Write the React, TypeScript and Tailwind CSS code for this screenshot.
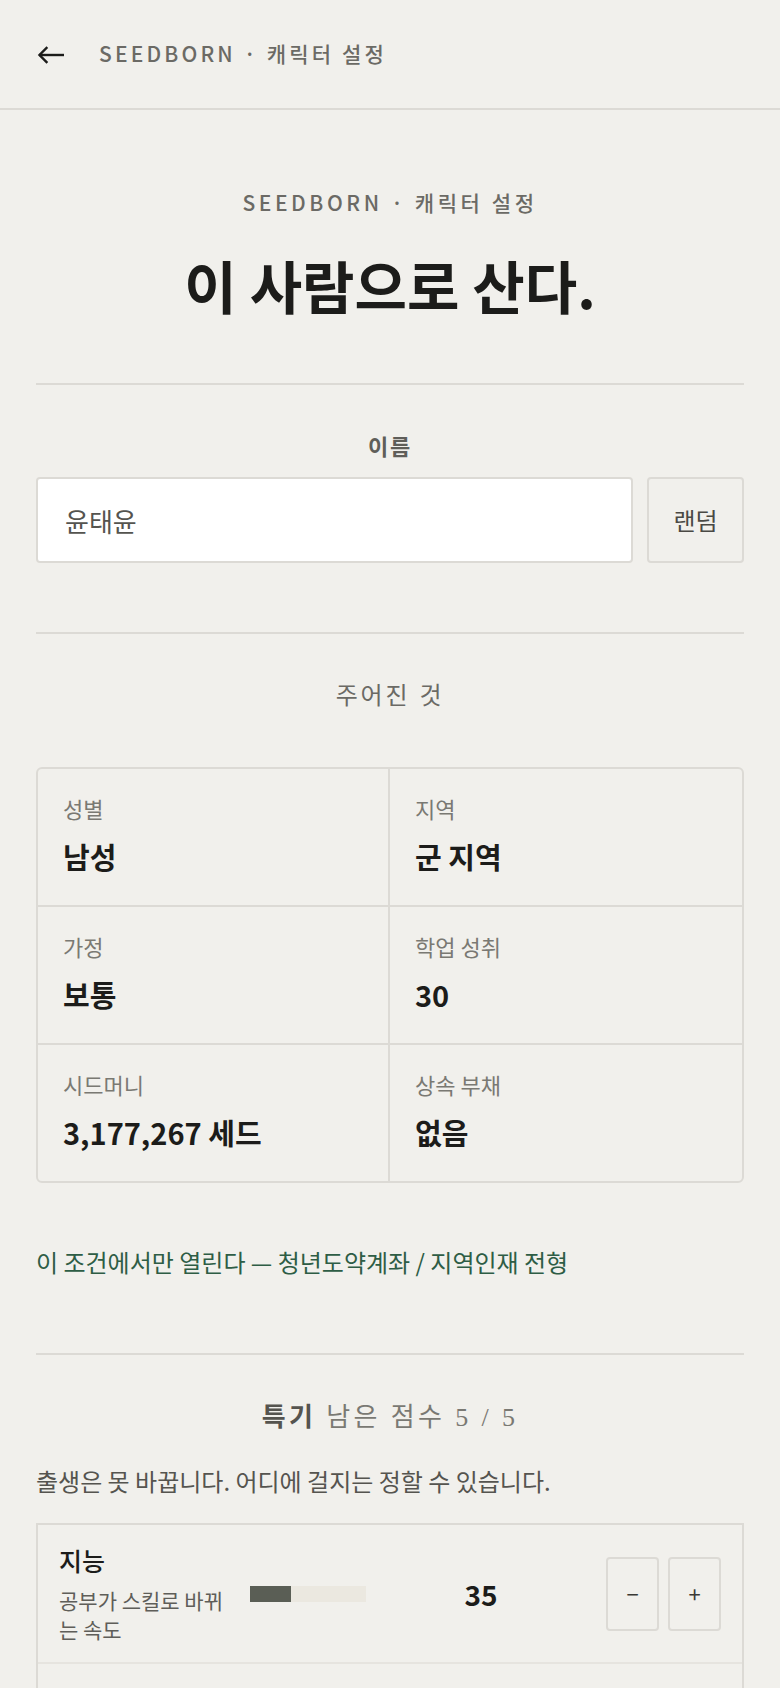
import { useState } from "react";

const sans = "font-['Noto_Sans_CJK_KR','Noto_Sans',sans-serif]";
const serif = "font-['Liberation_Serif','Noto_Sans_CJK_KR',serif]";

const given = [
  { label: "성별", value: "남성" },
  { label: "지역", value: "군 지역" },
  { label: "가정", value: "보통" },
  { label: "학업 성취", value: "30" },
  { label: "시드머니", value: "3,177,267 세드" },
  { label: "상속 부채", value: "없음" },
];

const stats = [
  { name: "지능", desc: "공부가 스킬로 바뀌는 속도", value: 35 },
  { name: "체력", desc: "야근과 노동을 버티는 한계", value: 40 },
];

const App = () => {
  const [name, setName] = useState("윤태윤");

  return (
    <div className={`min-h-screen bg-[#f1f0ec] text-[#1c1c1a] ${sans}`}>
      {/* Top bar */}
      <header className="h-[110px] border-b-2 border-[#dcdad5] flex items-center pl-[37px]">
        <button className="w-[28px] h-[18px] flex items-center mt-[1px]">
          <svg width="28" height="18" viewBox="0 0 28 18" fill="none">
            <path d="M2 9H27" stroke="#1c1c1a" strokeWidth="2.4" />
            <path d="M9.5 2L2.5 9L9.5 16" stroke="#1c1c1a" strokeWidth="2.4" strokeLinecap="square" />
          </svg>
        </button>
        <span className="ml-[34px] text-[21px] tracking-[0.15em] text-[#6b6a65] font-medium">
          SEEDBORN · 캐릭터 설정
        </span>
      </header>

      <main className="px-[36px]">
        {/* Heading */}
        <div className="pt-[76px] text-center">
          <p className="text-[21px] leading-[32px] tracking-[0.17em] text-[#6b6a65] font-medium">
            SEEDBORN · 캐릭터 설정
          </p>
          <h1 className="mt-[34px] text-[57px] leading-[64px] font-bold text-[#1c1c1a]">
            이 사람으로 산다.
          </h1>
        </div>

        <div className="mt-[67px] h-[2px] bg-[#dcdad5]" />

        {/* Name */}
        <div className="mt-[47px]">
          <p className={`text-center text-[22px] leading-[32px] tracking-[0.08em] font-bold text-[#5f5e59] ${serif}`}>
            이름
          </p>
          <div className="mt-[13px] flex gap-[14px]">
            <input
              value={name}
              onChange={(e) => setName(e.target.value)}
              className="flex-1 h-[86px] bg-white border-2 border-[#dcdad5] rounded-[4px] px-[27px] text-[26px] text-[#55544f] outline-none"
            />
            <button className="w-[97px] h-[86px] border-2 border-[#dcdad5] rounded-[4px] text-[24px] text-[#4a4944]">
              랜덤
            </button>
          </div>
        </div>

        <div className="mt-[69px] h-[2px] bg-[#dcdad5]" />

        {/* Given */}
        <p className={`mt-[44px] text-center text-[24px] leading-[36px] tracking-[0.12em] text-[#6b6a65] ${serif}`}>
          주어진 것
        </p>

        <div className="mt-[53px] border-2 border-[#dcdad5] rounded-[6px] grid grid-cols-2">
          {given.map((g, i) => (
            <div
              key={g.label}
              className={`pt-[23px] pb-[29px] px-[25px] ${i % 2 === 0 ? "border-r-2 border-[#dcdad5]" : ""} ${
                i < 4 ? "border-b-2 border-[#dcdad5]" : ""
              }`}
            >
              <p className="text-[22px] leading-[32px] text-[#7a7973]">{g.label}</p>
              <p className="mt-[12px] text-[29px] leading-[40px] font-bold text-[#1c1c1a]">{g.value}</p>
            </div>
          ))}
        </div>

        <p className="mt-[63px] text-[24px] leading-[32px] text-[#2e5d45]">
          이 조건에서만 열린다 — 청년도약계좌 / 지역인재 전형
        </p>

        <div className="mt-[75px] h-[2px] bg-[#dcdad5]" />

        {/* Talents */}
        <p className={`mt-[45px] text-center text-[26px] leading-[36px] tracking-[0.13em] text-[#7a7973] ${serif}`}>
          <span className="font-bold text-[#55544f]">특기</span> 남은 점수 5 / 5
        </p>
        <p className="mt-[29px] text-[24px] leading-[32px] text-[#55544f]">
          출생은 못 바꿉니다. 어디에 걸지는 정할 수 있습니다.
        </p>

        <div className="mt-[26px] border-2 border-[#dcdad5]">
          {stats.map((s) => (
            <div key={s.name} className="flex items-center py-[18px] pl-[21px] pr-[21px] border-b-2 border-[#e6e4df]">
              <div className="w-[182px]">
                <p className="text-[25px] leading-[34px] font-medium text-[#1c1c1a]">{s.name}</p>
                <p className="mt-[9px] text-[21px] leading-[29px] text-[#5f5e59]">{s.desc}</p>
              </div>
              <div className="ml-[9px] w-[116px] h-[16px] bg-[#ebe8e0]">
                <div className="h-full bg-[#5a5e55]" style={{ width: `${s.value}%` }} />
              </div>
              <div className="flex-1 pr-[10px] text-center text-[28px] font-bold text-[#1c1c1a]">{s.value}</div>
              <div className="flex gap-[9px]">
                <button className="w-[53px] h-[74px] border-2 border-[#dcdad5] rounded-[4px] text-[22px] text-[#3a3a36]">
                  −
                </button>
                <button className="w-[53px] h-[74px] border-2 border-[#dcdad5] rounded-[4px] text-[22px] text-[#3a3a36]">
                  +
                </button>
              </div>
            </div>
          ))}
        </div>
      </main>
    </div>
  );
};

export default App;
